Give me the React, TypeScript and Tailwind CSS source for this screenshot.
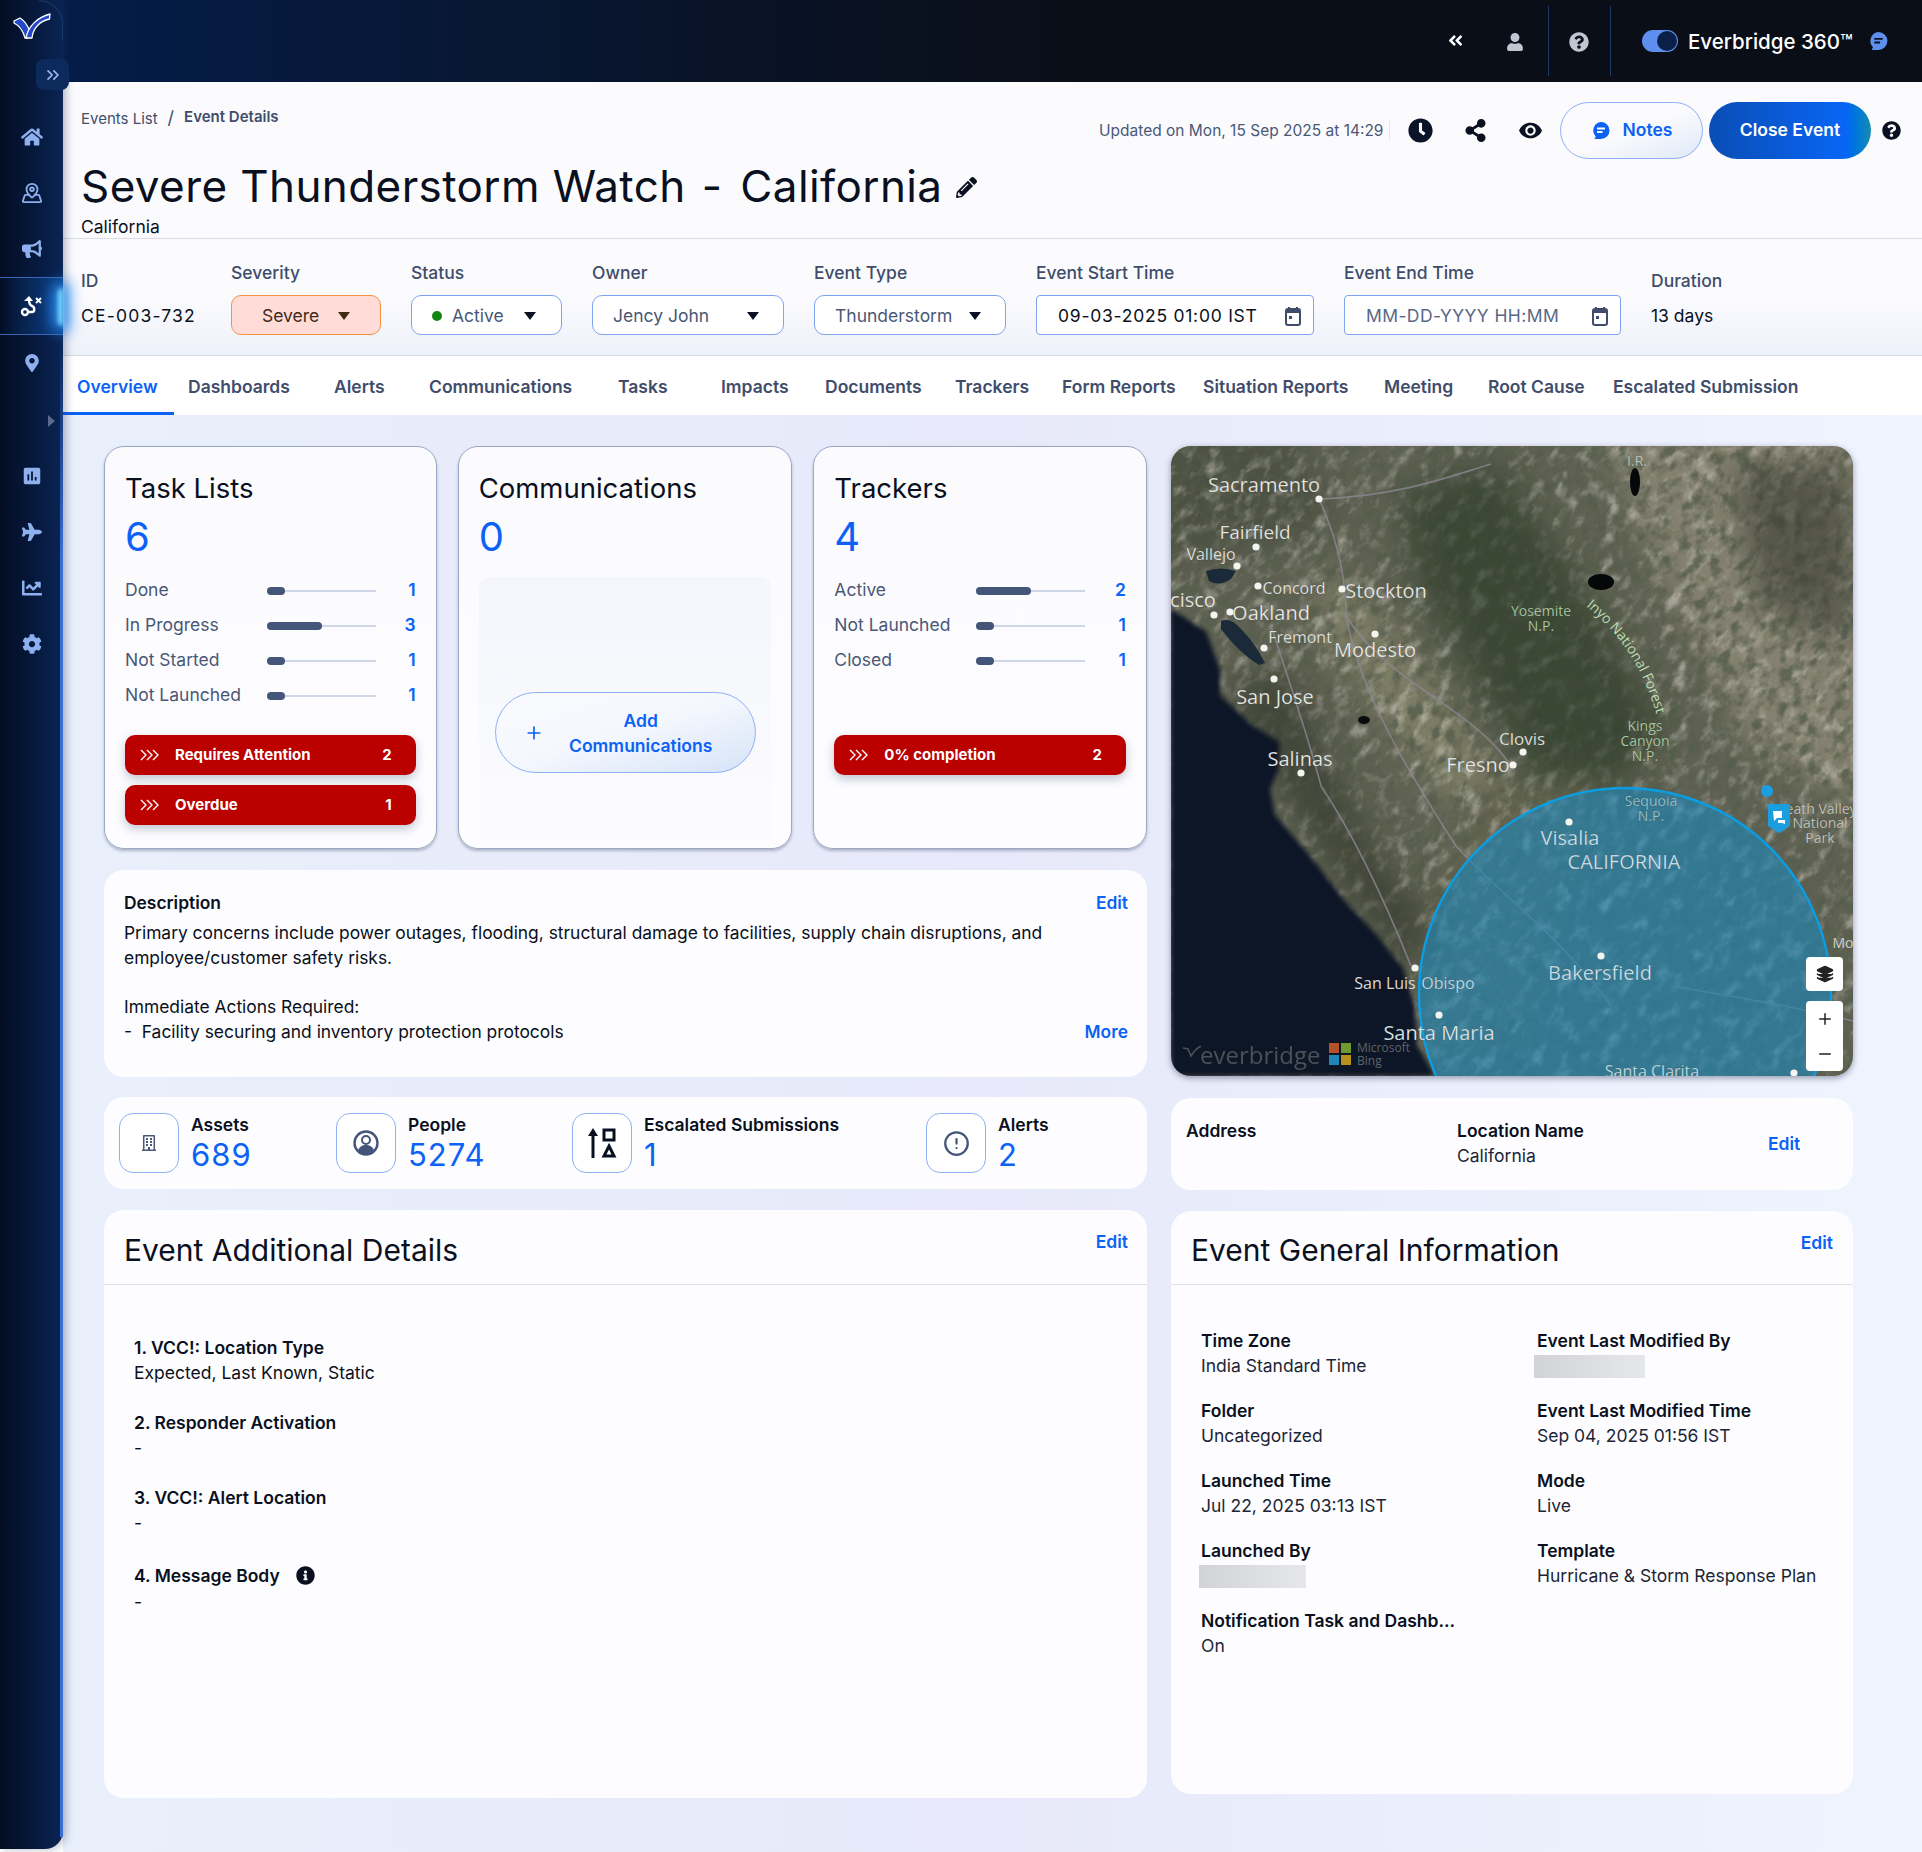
import React from 'react';
import { FaHome, FaBullhorn, FaPlane, FaCog, FaAngleDoubleLeft, FaUser, FaQuestionCircle, FaClock, FaShareAlt, FaPencilAlt, FaInfoCircle, FaRegBuilding, FaChartLine, FaMapMarkerAlt } from 'react-icons/fa';
import { MdPoll, MdVisibility } from 'react-icons/md';
import { ChevronsRight, CircleAlert, Layers, MapPinned, Plus, Minus } from 'lucide-react';

const tabs = [
  { label: 'Overview', cls: 'w-[111px] pl-[14px] pt-[6px] text-[#0b62f5] border-b-[3px] border-[#0b62f5]' },
  { label: 'Dashboards', cls: 'w-[147px] pl-[14px] pt-[3px] text-[#3f4d6b]' },
  { label: 'Alerts', cls: 'w-[108px] pl-[13px] pt-[3px] text-[#3f4d6b]' },
  { label: 'Communications', cls: 'w-[189px] pt-[3px] text-[#3f4d6b]' },
  { label: 'Tasks', cls: 'w-[103px] pt-[3px] text-[#3f4d6b]' },
  { label: 'Impacts', cls: 'w-[104px] pt-[3px] text-[#3f4d6b]' },
  { label: 'Documents', cls: 'w-[130px] pt-[3px] text-[#3f4d6b]' },
  { label: 'Trackers', cls: 'w-[107px] pt-[3px] text-[#3f4d6b]' },
  { label: 'Form Reports', cls: 'w-[141px] pt-[3px] text-[#3f4d6b]' },
  { label: 'Situation Reports', cls: 'w-[181px] pt-[3px] text-[#3f4d6b]' },
  { label: 'Meeting', cls: 'w-[104px] pt-[3px] text-[#3f4d6b]' },
  { label: 'Root Cause', cls: 'w-[125px] pt-[3px] text-[#3f4d6b]' },
  { label: 'Escalated Submission', cls: 'w-[220px] pt-[3px] text-[#3f4d6b]' },
];

const Caret = ({ color = '#0a1020' }: { color?: string }) => (
  <svg width="12" height="8" viewBox="0 0 12 8"><path d="M0 0h12L6 8z" fill={color} /></svg>
);

const Calendar = () => (
  <svg width="16" height="19" viewBox="0 0 16 19">
    <rect x="3" y="0" width="2" height="3" fill="#3f4d6b" />
    <rect x="11" y="0" width="2" height="3" fill="#3f4d6b" />
    <rect x="1" y="2" width="14" height="16" rx="2" fill="#fff" stroke="#3f4d6b" strokeWidth="2" />
    <rect x="1" y="2" width="14" height="4" fill="#3f4d6b" />
    <rect x="4" y="9" width="3" height="3" fill="#3f4d6b" />
  </svg>
);

const TripleChevron = () => (
  <svg width="20" height="14" viewBox="0 0 20 14" fill="none" stroke="#fff" strokeWidth="1.4">
    <path d="M1 2l5 5-5 5M7 2l5 5-5 5M13 2l5 5-5 5" />
  </svg>
);

const RouteIcon = () => (
  <svg width="24" height="22" viewBox="0 0 24 22" fill="none" stroke="#fff" strokeWidth="2.4">
    <circle cx="5" cy="17" r="3" />
    <path d="M9 17h3c3 0 3-5 0-6-2-1-3-2-3-6" />
    <path d="M4 6l5-5 4 5z" fill="#fff" stroke="none" />
    <path d="M16 3l5 5M21 3l-5 5" strokeWidth="2" />
  </svg>
);

const Logo = () => (
  <svg width="38" height="28" viewBox="0 0 38 28" stroke="#fff" strokeWidth="1.3" strokeLinejoin="round">
    <path d="M1 9l6-3c5 3 8 8 10 14l-2 6h-3C10 18 5 13 1 11z" fill="#2548c8" />
    <path d="M13 26C15 14 25 5 37 2l-.5 5C27 9 20 16 19 26z" fill="#2548c8" />
  </svg>
);

const Bubble = ({ size, fill, line }: { size: number; fill: string; line: string }) => (
  <svg width={size} height={size} viewBox="0 0 20 20">
    <path d="M10 1a8.5 8.5 0 0 1 0 17H3.5l1.2-2.6A8.5 8.5 0 0 1 10 1z" fill={fill} />
    <path d="M6 7.5h8M6 11h5.5" stroke={line} strokeWidth="1.8" fill="none" />
  </svg>
);

const MetaField = ({ label, w, children }: { label: string; w: string; children: React.ReactNode }) => (
  <div className={`${w} flex flex-col gap-[11px]`}>
    <div className="text-[17.5px] leading-[22px] font-medium text-[#3f4d6b]">{label}</div>
    {children}
  </div>
);

const Row = ({ label, fill, count }: { label: string; fill: string; count: number }) => (
  <div className="flex items-center h-[35px]">
    <div className="w-[142px] text-[17.5px] text-[#4a5876]">{label}</div>
    <div className="relative w-[109px] h-[2px] bg-[#cfd6e6]">
      <div className={`absolute left-0 top-[-3px] h-[8px] rounded-full bg-[#44557a] ${fill}`} />
    </div>
    <div className="flex-1 text-right text-[17.5px] font-semibold text-[#0b62f5]">{count}</div>
  </div>
);

const RedBar = ({ label, count }: { label: string; count: number }) => (
  <div className="flex items-center h-[40px] rounded-[10px] bg-[#bb0000] pl-[15px] pr-[24px] text-white text-[15px] font-bold shadow-[0_4px_10px_rgba(60,70,110,0.3)]">
    <TripleChevron />
    <span className="ml-[15px] flex-1">{label}</span>
    <span>{count}</span>
  </div>
);

const Card = ({ w, title, count, children }: { w: string; title: string; count: number; children: React.ReactNode }) => (
  <div className={`${w} h-[403px] rounded-[20px] border border-[#9aa8c4] bg-gradient-to-b from-[#fbfbfe] to-[#fdfdff] shadow-[0_2px_3px_rgba(40,50,80,0.3)] pt-[22px] px-[20px] flex flex-col`}>
    <div className="text-[27.5px] leading-[38px] text-[#0a1020]">{title}</div>
    <div className="text-[40px] leading-[50px] mt-[5px] text-[#0b62f5]">{count}</div>
    {children}
  </div>
);

const Field = ({ label, value, blur, blurCls }: { label: string; value?: string; blur?: boolean; blurCls?: string }) => (
  <div className="h-[70px]">
    <div className="text-[17.5px] leading-[25px] font-semibold text-[#0a1020]">{label}</div>
    {blur ? (
      <div className={`h-[23px] mt-[2px] bg-gradient-to-r from-[#d2d3d7] via-[#dcdde1] to-[#e6e7ea] ${blurCls}`} />
    ) : (
      <div className="text-[17.5px] leading-[25px] text-[#1c2536]">{value}</div>
    )}
  </div>
);

const Stat = ({ w, icon, label, value }: { w: string; icon: React.ReactNode; label: string; value: string }) => (
  <div className={`${w} flex`}>
    <div className="w-[60px] h-[60px] rounded-[14px] border border-[#8fb0f5] bg-white flex items-center justify-center shrink-0">{icon}</div>
    <div className="ml-[12px]">
      <div className="text-[17.5px] leading-[24px] font-semibold text-[#0a1020]">{label}</div>
      <div className="text-[31px] leading-[36px] tracking-[1px] text-[#0b62f5]">{value}</div>
    </div>
  </div>
);

const Place = ({ x, y, t, s = 20, fill = '#f0f0ec' }: { x: number; y: number; t: string; s?: number; fill?: string }) => (
  <text x={x} y={y + 2} fontSize={s} fill={fill} textAnchor="middle" dominantBaseline="middle" fontFamily="'Open Sans', sans-serif" stroke="rgba(0,0,0,0.35)" strokeWidth="0.4">{t}</text>
);

const dots = [
  [148, 53], [85, 101], [66, 120], [87, 140], [171, 143], [43, 169], [59, 166], [93, 202], [204, 188], [103, 233], [130, 327], [352, 306], [342, 319], [244, 522], [268, 569], [398, 376], [430, 510], [623, 627],
];

const MapView = () => (
  <div className="relative h-[630px] rounded-[20px] overflow-hidden shadow-[0_2px_6px_rgba(30,40,70,0.45)]">
    <svg width="682" height="630" viewBox="0 0 682 630" className="block">
      <defs>
        <filter id="terrain" x="0" y="0" width="100%" height="100%">
          <feTurbulence type="fractalNoise" baseFrequency="0.08 0.05" numOctaves="6" seed="7" />
          <feColorMatrix values="0 0 0 0 0.64  0 0 0 0 0.62  0 0 0 0 0.56  2 2 0 0 -1.95" />
        </filter>
        <filter id="terrainDark" x="0" y="0" width="100%" height="100%">
          <feTurbulence type="fractalNoise" baseFrequency="0.1 0.07" numOctaves="6" seed="21" />
          <feColorMatrix values="0 0 0 0 0.09  0 0 0 0 0.11  0 0 0 0 0.07  2.4 2.4 0 0 -2.2" />
        </filter>
        <filter id="soft"><feGaussianBlur stdDeviation="16" /></filter>
        <filter id="softer"><feGaussianBlur stdDeviation="2" /></filter>
        <path id="inyo" d="M415 160 C 445 185, 470 215, 486 270" />
      </defs>
      <rect width="682" height="630" fill="#5f6152" />
      <g filter="url(#soft)">
        <polygon points="430,-20 700,-20 700,360 580,300 500,150" fill="#84816f" />
        <polygon points="-20,-20 120,-20 170,70 120,100 -20,120" fill="#4e5142" />
        <polygon points="150,120 220,180 330,330 280,360 220,280 150,190" fill="#7f7f66" />
        <polygon points="320,340 440,340 400,430 350,600 260,600 270,470" fill="#66654f" />
      </g>
      <g transform="rotate(38 341 315)">
        <rect x="-300" y="-300" width="1300" height="1300" filter="url(#terrain)" opacity="0.55" />
        <rect x="-300" y="-300" width="1300" height="1300" filter="url(#terrainDark)" opacity="0.8" />
      </g>
      <g filter="url(#soft)" opacity="0.65">
        <polygon points="228,48 324,18 393,112 494,283 448,339 365,334 310,249 246,134" fill="#2c3a25" />
        <polygon points="49,240 120,230 150,300 200,400 260,480 240,530 180,450 110,340" fill="#333829" />
        <polygon points="560,20 680,20 680,200 590,160" fill="#3e3f34" />
      </g>
      <polygon points="0,163 35,185 49,223 49,249 81,279 108,296 108,322 99,343 104,369 140,411 173,454 205,488 232,522 244,561 246,599 264,630 0,630" fill="#0d1825" filter="url(#softer)" />
      <path d="M50 175 q10 -4 20 8 q14 14 24 34 l-6 2 q-20 -12 -38 -36z" fill="#1a2a38" />
      <path d="M35 125 q15 -5 30 0 l-5 8 q-12 8 -22 2z" fill="#1a2a38" />
      <g fill="none" stroke="#8d8794" strokeWidth="1.6" opacity="0.8">
        <path d="M148 53 C 230 50, 280 30, 320 18" />
        <path d="M148 53 C 165 90, 175 130, 175 170 C 220 240, 300 260, 340 320" />
        <path d="M175 170 C 190 250, 240 330, 285 400 C 320 440, 400 500, 440 560" />
        <path d="M100 180 C 120 240, 140 300, 150 340 C 190 400, 220 470, 240 520" />
        <path d="M500 540 C 560 550, 620 560, 682 575" />
      </g>
      <ellipse cx="464" cy="36" rx="5" ry="14" fill="#060708" />
      <ellipse cx="430" cy="136" rx="13" ry="8" fill="#060708" />
      <ellipse cx="193" cy="274" rx="6" ry="4" fill="#0a0b0c" />
      <circle cx="454" cy="548" r="206" fill="#1c86b8" opacity="0.62" />
      <circle cx="454" cy="548" r="206" fill="none" stroke="#0d9ce0" strokeWidth="2.5" />
      {dots.map(([x, y]) => (
        <circle key={`${x}-${y}`} cx={x} cy={y} r="3.6" fill="#f4f4f0" />
      ))}
      <Place x={93} y={39} t="Sacramento" />
      <Place x={84} y={86} t="Fairfield" s={19} />
      <Place x={40} y={108} t="Vallejo" s={16} />
      <Place x={123} y={142} t="Concord" s={16} />
      <Place x={215} y={145} t="Stockton" />
      <Place x={22} y={154} t="cisco" />
      <Place x={100} y={167} t="Oakland" />
      <Place x={129} y={191} t="Fremont" s={16} />
      <Place x={204} y={204} t="Modesto" />
      <Place x={104} y={251} t="San Jose" />
      <Place x={129} y={313} t="Salinas" />
      <Place x={351} y={292} t="Clovis" s={17} />
      <Place x={307} y={319} t="Fresno" />
      <Place x={370} y={164} t="Yosemite" s={14} fill="#bcdcb2" />
      <Place x={370} y={179} t="N.P." s={14} fill="#bcdcb2" />
      <text fontSize="14" fill="#bcdcb2" fontFamily="'Open Sans', sans-serif"><textPath href="#inyo">Inyo National Forest</textPath></text>
      <Place x={474} y={279} t="Kings" s={14} fill="#bcdcb2" />
      <Place x={474} y={294} t="Canyon" s={14} fill="#bcdcb2" />
      <Place x={474} y={309} t="N.P." s={14} fill="#bcdcb2" />
      <Place x={480} y={354} t="Sequoia" s={14} fill="#a9d2d8" />
      <Place x={480} y={369} t="N.P." s={14} fill="#a9d2d8" />
      <Place x={399} y={392} t="Visalia" fill="#cfe6ef" />
      <Place x={453} y={416} t="CALIFORNIA" fill="#cfe6ef" />
      <Place x={429} y={527} t="Bakersfield" fill="#cfe6ef" />
      <Place x={214} y={537} t="San Luis" s={16} />
      <Place x={277} y={537} t="Obispo" s={16} fill="#cfe6ef" />
      <Place x={268} y={587} t="Santa Maria" fill="#e0eef2" />
      <Place x={481} y={625} t="Santa Clarita" s={16} fill="#cfe6ef" />
      <Place x={645} y={362} t="Death Valley" s={14} fill="#d8d8cc" />
      <Place x={649} y={376} t="National" s={14} fill="#d8d8cc" />
      <Place x={649} y={391} t="Park" s={14} fill="#d8d8cc" />
      <Place x={672} y={496} t="Mo" s={14} />
      <Place x={466} y={14} t="I.R." s={14} fill="#d8d8cc" />
      <path d="M12 602l5 1 3 7c3-5 6-8 10-10" fill="none" stroke="#5f6468" strokeWidth="1.6" opacity="0.75" />
      <text x={29} y={618} fontSize="24" fill="#5f6468" opacity="0.75" fontFamily="'Open Sans', sans-serif">everbridge</text>
      <rect x="158" y="597" width="10" height="10" fill="#b5502a" />
      <rect x="170" y="597" width="10" height="10" fill="#6f9a2f" />
      <rect x="158" y="609" width="10" height="10" fill="#1f86b8" />
      <rect x="170" y="609" width="10" height="10" fill="#b8901e" />
      <text x={186} y={606} fontSize="12" fill="#5f6468" fontFamily="'Open Sans', sans-serif">Microsoft</text>
      <text x={186} y={619} fontSize="12" fill="#5f6468" fontFamily="'Open Sans', sans-serif">Bing</text>
      <circle cx="596" cy="345" r="6" fill="#1a9ee0" />
      <path d="M597 358 h20 a2 2 0 0 1 2 2 v20 l-11 7 -11 -7z" fill="#1a9ee0" />
      <path d="M602 365 h9 v7 h-5 l-3 3z" fill="#fff" />
      <path d="M607 374 h7 v4 l-3 -1 h-4z" fill="#fff" />
    </svg>
    <div className="absolute left-[635px] top-[511px] w-[37px] h-[34px] rounded-[4px] bg-white flex items-center justify-center">
      <Layers size={18} color="#222" fill="#222" />
    </div>
    <div className="absolute left-[635px] top-[555px] w-[37px] h-[70px] rounded-[4px] bg-white flex flex-col items-center justify-around text-[#222]">
      <Plus size={18} />
      <Minus size={18} />
    </div>
  </div>
);

export default function App() {
  return (
    <div className="flex w-[1922px] h-[1852px] overflow-hidden bg-white text-[#0a1020] [font-family:Inter,'Noto_Sans',sans-serif]">
      <aside className="relative z-10 w-[63px] h-[1849px] shrink-0 rounded-br-[18px] bg-gradient-to-r from-[#030d22] to-[#0a2454] flex flex-col items-center shadow-[3px_0_8px_rgba(40,50,90,0.35)]">
        <div className="absolute right-0 top-0 w-[24px] h-[40px] rounded-tr-[24px] border-t border-r border-[#1c3a66]" />
        <div className="absolute right-0 top-[335px] bottom-[12px] w-[3px] bg-gradient-to-b from-[#0a2454] to-[#3a6fd8] to-[15%]" />
        <div className="h-[137px] w-full pt-[12px] pl-[13px]"><Logo /></div>
        <div className="absolute left-[36px] top-[59px] w-[33px] h-[31px] rounded-[8px] bg-[#0d2a5c] flex items-center justify-center text-[#9db8f0]">
          <ChevronsRight size={20} />
        </div>
        <div className="h-[0px] flex items-center"><FaHome size={22} color="#8eb0ee" /></div>
        <div className="h-[56px] mt-[28px] flex items-center"><MapPinned size={22} color="#8eb0ee" /></div>
        <div className="h-[56px] flex items-center"><FaBullhorn size={20} color="#8eb0ee" /></div>
        <div className="relative w-full h-[58px] flex items-center justify-center border-y border-[#3a66b8] bg-gradient-to-r from-transparent to-[#0b3a7c]">
          <RouteIcon />
          <div className="absolute right-0 top-[10px] w-[5px] h-[38px] rounded-l-full bg-[#7fdcff] blur-[2px] shadow-[0_0_14px_6px_#2a8cf0]" />
        </div>
        <div className="h-[56px] flex items-center"><FaMapMarkerAlt size={18} color="#8eb0ee" /></div>
        <div className="self-end mr-[8px] mt-[24px] w-0 h-0 border-y-[6px] border-y-transparent border-l-[7px] border-l-[#5a6b8e]" />
        <div className="h-[56px] mt-[21px] flex items-center"><MdPoll size={22} color="#8eb0ee" /></div>
        <div className="h-[56px] flex items-center"><FaPlane size={20} color="#8eb0ee" /></div>
        <div className="h-[56px] flex items-center"><FaChartLine size={20} color="#8eb0ee" /></div>
        <div className="h-[56px] flex items-center"><FaCog size={20} color="#8eb0ee" /></div>
      </aside>

      <div className="flex-1 flex flex-col min-w-0">
        <header className="h-[82px] shrink-0 bg-gradient-to-r from-[#041c48] via-[#0a0e17] via-55% to-[#0a0e17] flex items-center justify-end text-white relative">
          <FaAngleDoubleLeft size={17} className="absolute left-[1384px] top-[32px]" color="#fff" />
          <FaUser size={18} className="absolute left-[1443px] top-[33px]" color="#c0c6d2" />
          <div className="absolute left-[1485px] top-[6px] h-[70px] w-px bg-[#1c3a66]" />
          <FaQuestionCircle size={20} className="absolute left-[1506px] top-[32px]" color="#c0c6d2" />
          <div className="absolute left-[1547px] top-[6px] h-[70px] w-px bg-[#1c3a66]" />
          <div className="absolute left-[1579px] top-[30px] w-[36px] h-[22px] rounded-full bg-[#5e8fee] flex items-center justify-end pr-[1px]">
            <div className="w-[20px] h-[20px] rounded-full bg-[#0b2048]" />
          </div>
          <div className="absolute left-[1625px] top-[28px] text-[20.5px] leading-[28px] font-medium">Everbridge 360™</div>
          <div className="absolute left-[1805px] top-[31px]"><Bubble size={21} fill="#5e8fee" line="#0a1020" /></div>
        </header>

        <div className="h-[157px] shrink-0 bg-[#fbfbfe] relative border-b border-[#d9dce4]">
          <div className="flex items-center pt-[25px] pl-[18px] text-[#3f4d6b]">
            <span className="text-[15px] leading-[20px] mt-[2px]">Events List</span>
            <span className="mx-[10px] text-[18px] leading-[20px]">/</span>
            <span className="text-[15px] leading-[20px] font-semibold -mt-[2px]">Event Details</span>
          </div>
          <div className="flex items-center pl-[18px] mt-[26px]">
            <span className="text-[44px] leading-[62px] tracking-[0.4px] text-[#0a1020] whitespace-nowrap">Severe Thunderstorm Watch<span className="ml-[16px] mr-[18px]">-</span>California</span>
            <FaPencilAlt size={21} className="ml-[14px] mt-[2px]" color="#0a1020" />
          </div>
          <div className="pl-[18px] text-[17.5px] leading-[20px]">California</div>

          <div className="absolute right-[0px] top-[20px] h-[57px] w-[859px] flex items-center">
            <span className="absolute left-[36px] top-[17px] text-[15.5px] leading-[24px] text-[#4a5876]">Updated on Mon, 15 Sep 2025 at 14:29</span>
            <div className="absolute left-[326px] h-[20px] w-px bg-[#e4e7ee]" />
            <FaClock size={25} color="#0a1428" className="absolute left-[345px]" />
            <FaShareAlt size={23} color="#0a1020" className="absolute left-[401px]" />
            <MdVisibility size={25} color="#0a1020" className="absolute left-[455px]" />
            <div className="absolute left-[497px] w-[143px] h-[57px] rounded-full border border-[#8fb0f5] bg-gradient-to-br from-[#fbfbfe] via-[#fbfbfe] to-[#dfe8f8] flex items-center justify-center gap-[12px] text-[#0b62f5] text-[17.5px] font-semibold">
              <Bubble size={20} fill="#0b62f5" line="#fff" />Notes
            </div>
            <div className="absolute left-[646px] w-[162px] h-[57px] rounded-full bg-gradient-to-r from-[#0a4db5] via-[#0866f5] via-85% to-[#1a8ab0] flex items-center justify-center text-white text-[17.5px] font-semibold">Close Event</div>
            <FaQuestionCircle size={19} color="#0a1020" className="absolute left-[819px]" />
          </div>
        </div>

        <div className="h-[117px] shrink-0 bg-gradient-to-b from-[#fbfbfe] via-[#fbfbfe] to-[#eef1fa] border-b border-[#d3d7e2] flex items-start pl-[18px] pt-[23px] gap-[30px]">
          <div className="w-[120px] pt-[8px]">
            <div className="text-[17.5px] leading-[22px] font-medium text-[#3f4d6b]">ID</div>
            <div className="text-[17.5px] leading-[22px] tracking-[1.2px] mt-[13px]">CE-003-732</div>
          </div>
          <MetaField label="Severity" w="w-[150px]">
            <div className="h-[40px] rounded-[10px] border border-[#f5913f] bg-[#ffdcd8] flex items-center pl-[30px] pt-[2px] text-[17.5px] text-[#3d2a18]">
              <span>Severe</span><span className="ml-[19px]"><Caret color="#3d2a10" /></span>
            </div>
          </MetaField>
          <MetaField label="Status" w="w-[151px]">
            <div className="h-[40px] rounded-[10px] border border-[#7ea3f2] bg-white flex items-center pl-[20px] pt-[2px] text-[17.5px] text-[#4a5876]">
              <span className="w-[10px] h-[10px] rounded-full bg-[#11870f] mr-[10px]" />
              <span>Active</span><span className="ml-[20px]"><Caret /></span>
            </div>
          </MetaField>
          <MetaField label="Owner" w="w-[192px]">
            <div className="h-[40px] rounded-[10px] border border-[#7ea3f2] bg-white flex items-center justify-between pl-[20px] pr-[24px] pt-[2px] text-[17.5px] text-[#4a5876]">
              <span>Jency John</span><Caret />
            </div>
          </MetaField>
          <MetaField label="Event Type" w="w-[192px]">
            <div className="h-[40px] rounded-[10px] border border-[#7ea3f2] bg-white flex items-center justify-between pl-[20px] pr-[24px] pt-[2px] text-[17.5px] text-[#4a5876]">
              <span>Thunderstorm</span><Caret />
            </div>
          </MetaField>
          <MetaField label="Event Start Time" w="w-[278px]">
            <div className="h-[40px] rounded-[4px] border border-[#7ea3f2] bg-white flex items-center justify-between pl-[21px] pr-[12px] pt-[2px] text-[17.5px] tracking-[0.75px] text-[#0a1020]">
              <span>09-03-2025 01:00 IST</span><Calendar />
            </div>
          </MetaField>
          <MetaField label="Event End Time" w="w-[277px]">
            <div className="h-[40px] rounded-[4px] border border-[#7ea3f2] bg-white flex items-center justify-between pl-[21px] pr-[12px] pt-[2px] text-[17.5px] tracking-[0.4px] text-[#5a6884]">
              <span>MM-DD-YYYY HH:MM</span><Calendar />
            </div>
          </MetaField>
          <div className="pt-[8px]">
            <div className="text-[17.5px] leading-[22px] font-medium text-[#3f4d6b]">Duration</div>
            <div className="text-[17.5px] leading-[22px] mt-[13px]">13 days</div>
          </div>
        </div>

        <nav className="h-[59px] shrink-0 bg-white flex">
          {tabs.map((t) => (
            <div key={t.label} className={`h-[59px] flex items-center text-[17.5px] font-semibold whitespace-nowrap ${t.cls}`}>{t.label}</div>
          ))}
        </nav>

        <main className="flex-1 bg-gradient-to-r from-[#e9effb] via-[#e7e9fa] to-[#eff4fe] flex pl-[41px] pt-[31px] gap-[24px]">
          <div className="w-[1043px] shrink-0 flex flex-col">
            <div className="flex gap-[21px]">
              <Card w="w-[333px]" title="Task Lists" count={6}>
                <div className="mt-[11px]">
                  <Row label="Done" fill="w-[18px]" count={1} />
                  <Row label="In Progress" fill="w-[55px]" count={3} />
                  <Row label="Not Started" fill="w-[18px]" count={1} />
                  <Row label="Not Launched" fill="w-[18px]" count={1} />
                </div>
                <div className="mt-[22px] flex flex-col gap-[10px]">
                  <RedBar label="Requires Attention" count={2} />
                  <RedBar label="Overdue" count={1} />
                </div>
              </Card>
              <Card w="w-[335px]" title="Communications" count={0}>
                <div className="flex-1 mt-[15px] rounded-t-[10px] bg-gradient-to-b from-[#f4f6fb] to-[#fcfcff] pl-[16px] pr-[15px] pt-[115px]">
                  <div className="h-[81px] rounded-full border border-[#8fb0f5] bg-gradient-to-br from-[#fafbfe] via-[#f4f7fd] to-[#d5e3f8] flex items-center pl-[28px]">
                    <Plus size={20} color="#0b62f5" />
                    <div className="w-[162px] ml-[16px] text-center text-[17.5px] leading-[25px] font-semibold text-[#0b62f5]">Add Communications</div>
                  </div>
                </div>
              </Card>
              <Card w="w-[334px]" title="Trackers" count={4}>
                <div className="mt-[11px]">
                  <Row label="Active" fill="w-[55px]" count={2} />
                  <Row label="Not Launched" fill="w-[18px]" count={1} />
                  <Row label="Closed" fill="w-[18px]" count={1} />
                </div>
                <div className="mt-[57px]">
                  <RedBar label="0% completion" count={2} />
                </div>
              </Card>
            </div>

            <section className="mt-[21px] h-[207px] rounded-[20px] bg-[#fdfdff] pl-[20px] pr-[19px] pt-[20px] text-[17.4px] leading-[25px]">
              <div className="flex justify-between">
                <span className="font-semibold">Description</span>
                <span className="font-semibold text-[#0b62f5]">Edit</span>
              </div>
              <p className="mt-[5px]">Primary concerns include power outages, flooding, structural damage to facilities, supply chain disruptions, and<br />employee/customer safety risks.</p>
              <p className="mt-[24px]">Immediate Actions Required:</p>
              <div className="flex justify-between">
                <span className="whitespace-pre">-  Facility securing and inventory protection protocols</span>
                <span className="font-semibold text-[#0b62f5]">More</span>
              </div>
            </section>

            <section className="mt-[20px] h-[92px] rounded-[20px] bg-[#fdfdff] flex items-center pl-[15px]">
              <Stat w="w-[217px]" icon={<FaRegBuilding size={16} color="#4a5876" />} label="Assets" value="689" />
              <Stat
                w="w-[236px]"
                icon={
                  <svg width="26" height="26" viewBox="0 0 26 26">
                    <circle cx="13" cy="13" r="11.5" fill="#fff" stroke="#44557a" strokeWidth="2.4" />
                    <circle cx="13" cy="10" r="4" fill="none" stroke="#44557a" strokeWidth="2" />
                    <path d="M5 20c2-4 5-5 8-5s6 1 8 5c-2 3-5 4.500-8 4.500S7 23 5 20z" fill="#44557a" />
                  </svg>
                }
                label="People"
                value="5274"
              />
              <Stat
                w="w-[354px]"
                icon={
                  <svg width="30" height="32" viewBox="0 0 30 32" fill="none" stroke="#0a1020" strokeWidth="3">
                    <path d="M6 31V6" />
                    <path d="M1 9l5-8 5 8z" fill="#0a1020" strokeWidth="0" />
                    <rect x="17" y="3" width="10" height="10" />
                    <path d="M22 19l5 10H17z" />
                  </svg>
                }
                label="Escalated Submissions"
                value="1"
              />
              <Stat w="w-[200px]" icon={<CircleAlert size={27} color="#44557a" />} label="Alerts" value="2" />
            </section>

            <section className="mt-[21px] h-[588px] rounded-[20px] bg-[#fdfdff]">
              <div className="relative h-[75px] border-b border-[#dfe1e6] pl-[20px] pt-[20px] text-[30px] leading-[40px]">
                Event Additional Details
                <span className="absolute right-[19px] top-[19px] text-[17.5px] leading-[25px] font-semibold text-[#0b62f5]">Edit</span>
              </div>
              <div className="pl-[30px] pt-[50px] text-[17.5px] leading-[25px]">
                <div className="h-[75px]"><div className="font-semibold">1. VCC!: Location Type</div><div>Expected, Last Known, Static</div></div>
                <div className="h-[75px]"><div className="font-semibold">2. Responder Activation</div><div>-</div></div>
                <div className="h-[78px]"><div className="font-semibold">3. VCC!: Alert Location</div><div>-</div></div>
                <div>
                  <div className="font-semibold flex items-center">4. Message Body<FaInfoCircle size={19} className="ml-[16px]" /></div>
                  <div className="mt-[1px]">-</div>
                </div>
              </div>
            </section>
          </div>

          <div className="w-[682px] shrink-0 flex flex-col">
            <MapView />
            <section className="mt-[22px] h-[92px] rounded-[20px] bg-[#fdfdff] relative text-[17.5px] leading-[25px] flex pl-[15px] pt-[20px]">
              <div className="w-[271px] font-semibold">Address</div>
              <div>
                <div className="font-semibold">Location Name</div>
                <div className="text-[#1c2536]">California</div>
              </div>
              <span className="absolute left-[597px] top-[33px] font-semibold text-[#0b62f5]">Edit</span>
            </section>
            <section className="mt-[21px] h-[583px] rounded-[20px] bg-[#fdfdff]">
              <div className="relative h-[74px] border-b border-[#dfe1e6] pl-[20px] pt-[19px] text-[30px] leading-[40px]">
                Event General Information
                <span className="absolute right-[20px] top-[19px] text-[17.5px] leading-[25px] font-semibold text-[#0b62f5]">Edit</span>
              </div>
              <div className="grid grid-cols-[336px_1fr] pl-[30px] pt-[43px]">
                <div>
                  <Field label="Time Zone" value="India Standard Time" />
                  <Field label="Folder" value="Uncategorized" />
                  <Field label="Launched Time" value="Jul 22, 2025 03:13 IST" />
                  <Field label="Launched By" blur blurCls="w-[107px] -ml-[2px]" />
                  <Field label="Notification Task and Dashb..." value="On" />
                </div>
                <div>
                  <Field label="Event Last Modified By" blur blurCls="w-[111px] -ml-[3px]" />
                  <Field label="Event Last Modified Time" value="Sep 04, 2025 01:56 IST" />
                  <Field label="Mode" value="Live" />
                  <Field label="Template" value="Hurricane & Storm Response Plan" />
                </div>
              </div>
            </section>
          </div>
        </main>
      </div>
    </div>
  );
}
